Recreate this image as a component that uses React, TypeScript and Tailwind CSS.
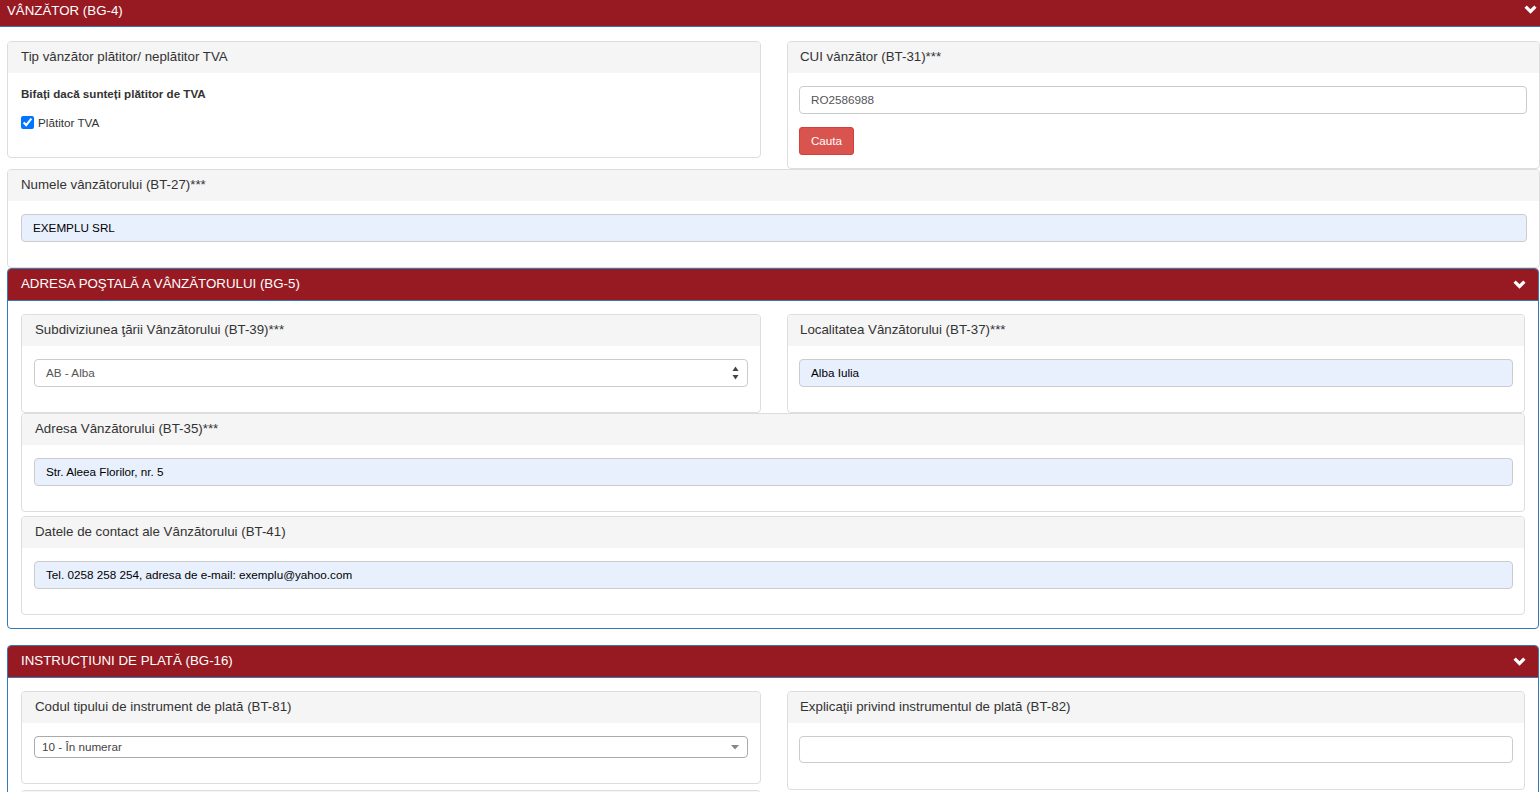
import React from "react";

const FONT = { fontFamily: '"Liberation Sans", Arial, Helvetica, sans-serif' };

function Chevron({ className = "" }: { className?: string }) {
  return (
    <svg width="13" height="9" viewBox="0 0 13 9" className={className}>
      <path d="M1.6 1.6 L6.5 6.5 L11.4 1.6" fill="none" stroke="#fff" strokeWidth="3.2" strokeLinejoin="miter" strokeLinecap="butt" />
    </svg>
  );
}

function Panel({
  title,
  className = "",
  bodyClass = "",
  headClass = "pl-[13px]",
  children,
}: {
  title: string;
  className?: string;
  bodyClass?: string;
  headClass?: string;
  children?: React.ReactNode;
}) {
  return (
    <div className={`border border-[#dddddd] rounded-[4px] bg-white ${className}`}>
      <div className={`h-[31px] bg-[#f5f5f5] flex items-center pb-[2px] text-[13.3px] text-[#333] rounded-t-[3px] ${headClass}`}>
        {title}
      </div>
      <div className={bodyClass}>{children}</div>
    </div>
  );
}

function Input({ value = "", autofill = false, className = "" }: { value?: string; autofill?: boolean; className?: string }) {
  return (
    <div
      className={`h-[28px] border border-[#cccccc] rounded-[4px] flex items-center pl-[11px] text-[11.7px] ${
        autofill ? "bg-[#e8f0fe] text-black" : "bg-white text-[#555]"
      } ${className}`}
    >
      {value}
    </div>
  );
}

function SectionHeader({ title }: { title: string }) {
  return (
    <div className="h-[32px] bg-[#971a23] border-b border-[#337ab7] flex items-center justify-between pl-[13px] pr-[12px] pb-[1px] text-white text-[13.3px] rounded-t-[3px]">
      <span>{title}</span>
      <Chevron />
    </div>
  );
}

export default function App() {
  return (
    <div className="w-[1540px] bg-white overflow-hidden" style={FONT}>
      {/* Top header */}
      <div className="h-[27px] bg-[#971a23] border-b border-[#337ab7] flex items-start justify-between pl-[7px] pr-[3px] text-white text-[13.3px]">
        <span className="pt-[2px] leading-[17px]">VÂNZĂTOR (BG-4)</span>
        <Chevron className="mt-[5px]" />
      </div>

      {/* First row */}
      <div className="grid grid-cols-[754px_753px] gap-[26px] pl-[7px] mt-[14px] items-start">
        <Panel title="Tip vânzător plătitor/ neplătitor TVA" bodyClass="pl-[13px] pt-[12px] pb-[26px]">
          <div className="h-[17px] flex items-center text-[11.6px] font-bold text-[#333]">
            Bifați dacă sunteți plătitor de TVA
          </div>
          <div className="h-[17px] mt-[12px] flex items-center gap-[4px] text-[11.7px] text-[#333]">
            <input type="checkbox" defaultChecked className="w-[13px] h-[13px] m-0 accent-[#0075ff]" />
            <span>Plătitor TVA</span>
          </div>
        </Panel>
        <Panel title="CUI vânzător (BT-31)***" headClass="pl-[12px]" bodyClass="pl-[11px] pr-[12px] pt-[13px] pb-[13px]">
          <Input value="RO2586988" />
          <div className="mt-[13px] w-[55px] h-[28px] bg-[#d9534f] border border-[#d43f3a] rounded-[3px] flex items-center justify-center text-white text-[11.7px]">
            Cauta
          </div>
        </Panel>
      </div>

      {/* Numele */}
      <Panel title="Numele vânzătorului (BT-27)***" className="ml-[7px] w-[1533px]" bodyClass="pl-[13px] pr-[12px] pt-[13px] pb-[25px]">
        <Input value="EXEMPLU SRL" autofill className="pl-[10px]" />
      </Panel>

      {/* ADRESA */}
      <div className="ml-[7px] w-[1532px] border border-[#337ab7] rounded-[4px]">
        <SectionHeader title="ADRESA POŞTALĂ A VÂNZĂTORULUI (BG-5)" />
        <div className="px-[13px] pt-[13px] pb-[13px]">
          <div className="grid grid-cols-[740px_1fr] gap-[26px] items-start">
            <Panel title="Subdiviziunea ţării Vânzătorului (BT-39)***" bodyClass="pl-[12px] pr-[12px] pt-[13px] pb-[25px]">
              <div className="h-[28px] border border-[#cccccc] rounded-[4px] flex items-center justify-between pl-[11px] pr-[8px] text-[11.7px] text-[#555] bg-white">
                <span>AB - Alba</span>
                <svg width="7" height="14" viewBox="0 0 7 14">
                  <path d="M3.5 0.5 L6.5 5 L0.5 5 Z" fill="#444" />
                  <path d="M3.5 13.5 L6.5 9 L0.5 9 Z" fill="#444" />
                </svg>
              </div>
            </Panel>
            <Panel title="Localitatea Vânzătorului (BT-37)***" headClass="pl-[12px]" bodyClass="pl-[11px] pr-[11px] pt-[13px] pb-[25px]">
              <Input value="Alba Iulia" autofill />
            </Panel>
          </div>
          <Panel title="Adresa Vânzătorului (BT-35)***" bodyClass="pl-[12px] pr-[11px] pt-[13px] pb-[25px]">
            <Input value="Str. Aleea Florilor, nr. 5" autofill />
          </Panel>
          <Panel title="Datele de contact ale Vânzătorului (BT-41)" className="mt-[4px]" bodyClass="pl-[12px] pr-[11px] pt-[13px] pb-[25px]">
            <Input value="Tel. 0258 258 254, adresa de e-mail: exemplu@yahoo.com" autofill />
          </Panel>
        </div>
      </div>

      {/* INSTRUCTIUNI */}
      <div className="ml-[7px] mt-[16px] w-[1532px] border border-[#337ab7] rounded-[4px]">
        <SectionHeader title="INSTRUCŢIUNI DE PLATĂ (BG-16)" />
        <div className="px-[13px] pt-[13px] pb-[13px]">
          <div className="grid grid-cols-[740px_1fr] gap-[26px] items-start">
            <Panel title="Codul tipului de instrument de plată (BT-81)" bodyClass="pl-[12px] pr-[12px] pt-[13px] pb-[25px]">
              <div className="h-[22px] border border-[#aaaaaa] rounded-[4px] flex items-center justify-between pl-[7px] pr-[8px] text-[11.7px] text-[#444] bg-white">
                <span>10 - În numerar</span>
                <svg width="8" height="5" viewBox="0 0 8 5">
                  <path d="M0 0 L8 0 L4 4.5 Z" fill="#888" />
                </svg>
              </div>
            </Panel>
            <Panel title="Explicaţii privind instrumentul de plată (BT-82)" headClass="pl-[12px]" bodyClass="pl-[11px] pr-[11px] pt-[13px] pb-[26px]">
              <div className="h-[27px] border border-[#cccccc] rounded-[4px] bg-white" />
            </Panel>
          </div>
          <div className="grid grid-cols-[740px_1fr] gap-[26px] items-start">
            <div className="h-[60px] border border-[#dddddd] rounded-[4px] bg-white">
              <div className="h-[31px] bg-[#f5f5f5] rounded-t-[3px]" />
            </div>
            <div />
          </div>
        </div>
      </div>
    </div>
  );
}
